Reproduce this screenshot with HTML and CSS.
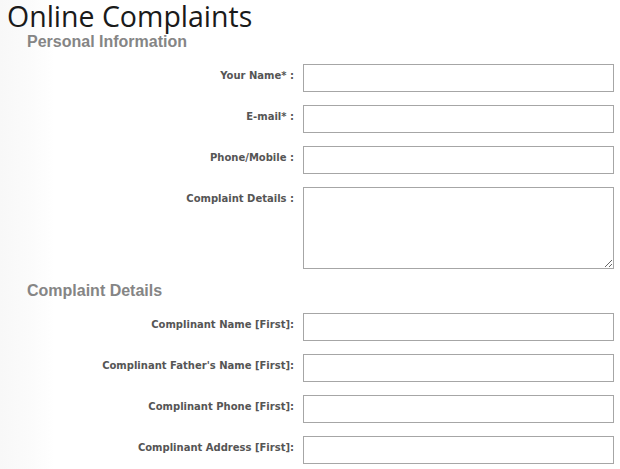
FILE: index.html
```html
<!DOCTYPE html>
<html>
<head>
<meta charset="utf-8">
<link rel="stylesheet" href="styles.css">
</head>
<body>
<div class="page">
  <h1 class="title">Online Complaints</h1>
  <h2 class="section">Personal Information</h2>
  <div class="form">
    <label class="lbl">Your Name* :</label><input class="field" type="text">
    <label class="lbl">E-mail* :</label><input class="field" type="text">
    <label class="lbl">Phone/Mobile :</label><input class="field" type="text">
    <label class="lbl">Complaint Details :</label><textarea class="field area"></textarea>
  </div>
  <h2 class="section">Complaint Details</h2>
  <div class="form">
    <label class="lbl">Complinant Name [First]:</label><input class="field" type="text">
    <label class="lbl">Complinant Father's Name [First]:</label><input class="field" type="text">
    <label class="lbl">Complinant Phone [First]:</label><input class="field" type="text">
    <label class="lbl">Complinant Address [First]:</label><input class="field" type="text">
  </div>
</div>
</body>
</html>
```
FILE: styles.css
```css
html, body {
  margin: 0;
  padding: 0;
  background: #fff;
}
.page {
  width: 620px;
  height: 469px;
  overflow: hidden;
  background: linear-gradient(to right, #f8f8f8 0px, #fbfbfb 30px, #ffffff 55px);
}
.title {
  margin: 0;
  padding: 0 0 0 7px;
  font-family: "Open Sans", "DejaVu Sans", sans-serif;
  font-weight: normal;
  font-size: 28.5px;
  line-height: 33px;
  color: #1a1a1a;
}
.section {
  margin: 0;
  padding: 0 0 0 27px;
  font-family: "Liberation Sans", Arial, sans-serif;
  font-weight: bold;
  font-size: 16px;
  line-height: 18px;
  color: #858585;
}
.form {
  display: grid;
  grid-template-columns: 294px 311px;
  column-gap: 9px;
  row-gap: 13px;
  padding-top: 13px;
}
.form + .section {
  margin-top: 13px;
}
.lbl {
  justify-self: end;
  padding-top: 5px;
  font-family: "DejaVu Sans", Tahoma, sans-serif;
  font-weight: bold;
  font-size: 10px;
  line-height: 14px;
  color: #555;
}
.field {
  box-sizing: border-box;
  width: 311px;
  height: 28px;
  margin: 0;
  border: 1px solid #a6a6a6;
  border-radius: 0;
  background: #fff;
  padding: 2px 4px;
}
.area {
  height: 82px;
  resize: both;
}
```
